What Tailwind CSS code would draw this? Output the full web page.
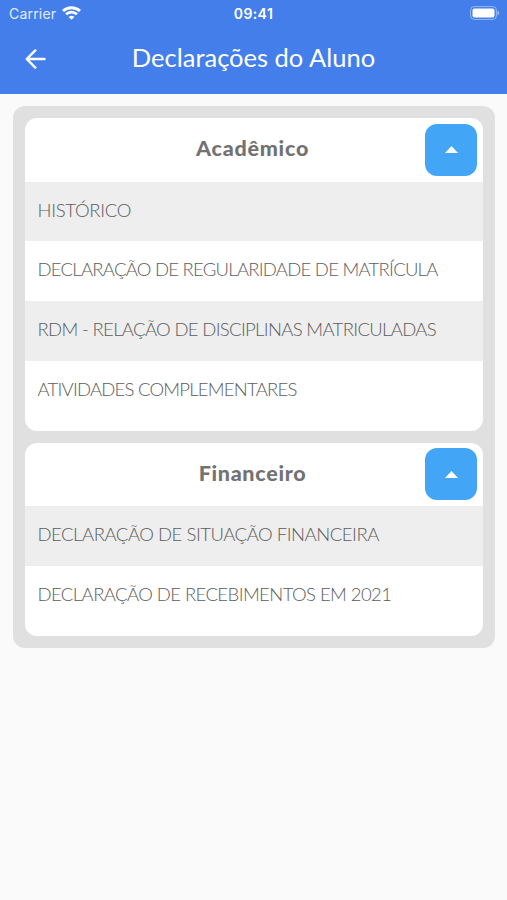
<!DOCTYPE html>
<html lang="pt-BR">
<head>
    <meta charset="UTF-8">
    <meta name="viewport" content="width=device-width, initial-scale=1.0">
    <title>Declarações do Aluno</title>
    <script src="https://cdn.jsdelivr.net/npm/@tailwindcss/browser@4"></script>
</head>
<body class="bg-[#fafafa] min-h-screen font-['Lato',sans-serif]">
    <header class="bg-[#437eeb] h-[93.5px] text-white">
        <!-- Status bar -->
        <div class="h-[27px] grid grid-cols-3 items-center pl-[9px] pr-[7px] font-['Inter',sans-serif] text-[14px]">
            <div class="flex items-center gap-[6px]">
                <span class="tracking-[0.2px] text-white/85">Carrier</span>
                <svg class="w-[19px] h-[14px] -mt-[2px]" viewBox="0 0 19 14" fill="none" stroke="currentColor" stroke-width="2.8">
                    <path d="M1 5.1C5.8.6 13.2.6 18 5.1"/>
                    <path d="M4 8.3c3.2-2.9 7.8-2.9 11 0"/>
                    <path d="M9.500 13.800 6.600 10.900C8.200 9.400 10.800 9.400 12.400 10.900Z" fill="currentColor" stroke="none"/>
                </svg>
            </div>
            <span class="text-center font-semibold tracking-[0.4px] -ml-[2px]">09:41</span>
            <svg class="w-[30px] h-[14px] justify-self-end -mt-[1px]" viewBox="0 0 30 14" fill="none">
                <rect x="0.6" y="0.6" width="25.800" height="12.800" rx="3.500" stroke="white" stroke-opacity="0.45"/>
                <rect x="2.500" y="2.500" width="22" height="9" rx="2" fill="white"/>
                <path d="M27.500 4.700c2.200.8 2.200 3.800 0 4.600Z" fill="white" fill-opacity="0.5"/>
            </svg>
        </div>
        <!-- Title bar -->
        <div class="h-[64px] grid grid-cols-[60px_1fr_60px] items-center">
            <svg class="w-[22px] h-[20px] ml-[25px]" viewBox="0 0 22 20" fill="none" stroke="currentColor" stroke-width="2.4" stroke-linecap="round" stroke-linejoin="round">
                <path d="M19.500 10H1.800M10.300 1.400 1.700 10l8.600 8.600"/>
            </svg>
            <h1 class="text-center text-[25.500px] leading-[30px] tracking-[0px] -mt-[5px]">Declarações do Aluno</h1>
        </div>
    </header>

    <main class="mx-[13px] mt-[12.500px] w-[482px] bg-[#e0e0e0] rounded-xl p-3 flex flex-col gap-3 text-[#5c5c5c]">
        <section class="bg-white rounded-xl overflow-hidden pb-[10px]">
            <div class="h-[63.500px] grid grid-cols-[58px_1fr_58px] items-center">
                <h2 class="col-start-2 text-center text-[21.500px] font-black leading-none tracking-[0.75px] text-[#727272] -mt-[3px] -ml-[3px]">Acadêmico</h2>
                <button class="w-[52px] h-[52px] rounded-xl bg-[#42a5f5] flex items-center justify-center">
                    <svg class="w-[13px] h-[7px]" viewBox="0 0 13 7" fill="white"><path d="M0 7 6.500 0 13 7Z"/></svg>
                </button>
            </div>
            <ul class="text-[18.500px] font-light leading-[56px] whitespace-nowrap">
                <li class="h-[59.800px] pl-[12.5px] bg-[#eeeeee]"><span class="tracking-[-0.3px]">HISTÓRICO</span></li>
                <li class="h-[59.800px] pl-[12.5px]"><span class="tracking-[-0.74px]">DECLARAÇÃO DE REGULARIDADE DE MATRÍCULA</span></li>
                <li class="h-[59.800px] pl-[12.5px] bg-[#eeeeee]"><span class="tracking-[-0.66px]">RDM - RELAÇÃO DE DISCIPLINAS MATRICULADAS</span></li>
                <li class="h-[59.800px] pl-[12.5px]"><span class="tracking-[-0.77px]">ATIVIDADES COMPLEMENTARES</span></li>
            </ul>
        </section>

        <section class="bg-white rounded-xl overflow-hidden pb-[10px]">
            <div class="h-[63.500px] grid grid-cols-[58px_1fr_58px] items-center">
                <h2 class="col-start-2 text-center text-[21.500px] font-black leading-none tracking-[0.7px] text-[#727272] -mt-[2px] -ml-[3px]">Financeiro</h2>
                <button class="w-[52px] h-[52px] rounded-xl bg-[#42a5f5] flex items-center justify-center">
                    <svg class="w-[13px] h-[7px]" viewBox="0 0 13 7" fill="white"><path d="M0 7 6.500 0 13 7Z"/></svg>
                </button>
            </div>
            <ul class="text-[18.500px] font-light leading-[56px] whitespace-nowrap">
                <li class="h-[59.800px] pl-[12.5px] bg-[#eeeeee]"><span class="tracking-[-0.46px]">DECLARAÇÃO DE SITUAÇÃO FINANCEIRA</span></li>
                <li class="h-[59.800px] pl-[12.5px]"><span class="tracking-[-0.57px]">DECLARAÇÃO DE RECEBIMENTOS EM 2021</span></li>
            </ul>
        </section>
    </main>
</body>
</html>
